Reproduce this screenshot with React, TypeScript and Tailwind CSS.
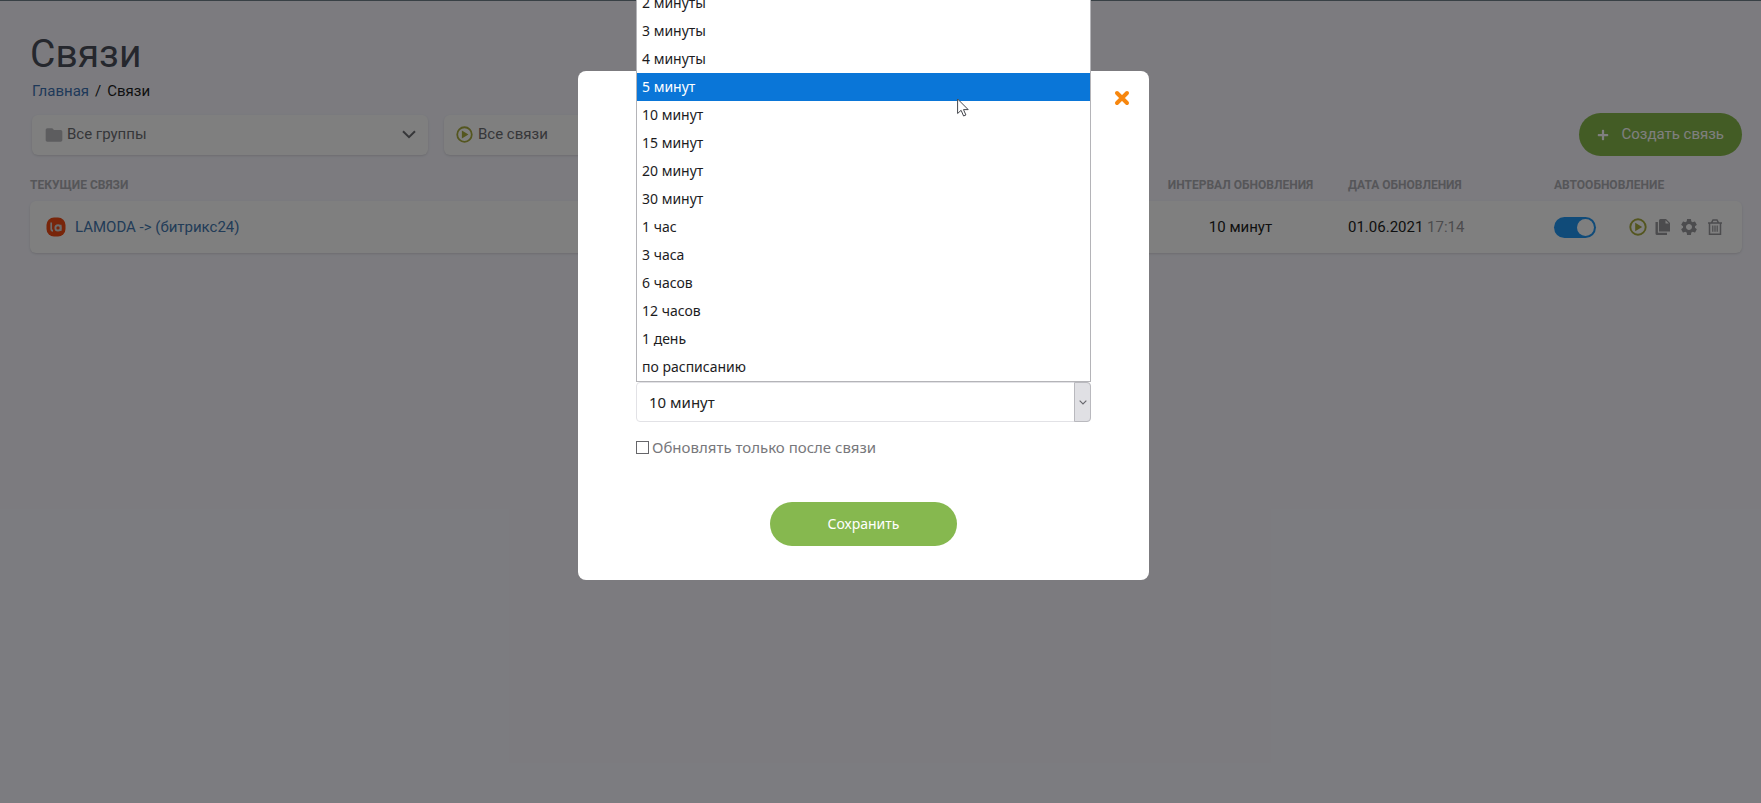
import { FaPlus } from 'react-icons/fa';
import { MdFolder, MdSettings } from 'react-icons/md';

const intervals = [
  '2 минуты',
  '3 минуты',
  '4 минуты',
  '5 минут',
  '10 минут',
  '15 минут',
  '20 минут',
  '30 минут',
  '1 час',
  '3 часа',
  '6 часов',
  '12 часов',
  '1 день',
  'по расписанию',
];

const PlayIcon = ({ className }: { className: string }) => (
  <svg viewBox="0 0 18 18" className={className} fill="none">
    <circle cx="9" cy="9" r="7.700" stroke="currentColor" strokeWidth="1.900" />
    <path d="M6.200 4.800v8.400L13.200 9z" fill="currentColor" />
  </svg>
);

const ChevronIcon = ({ className }: { className: string }) => (
  <svg viewBox="0 0 14 9" className={className} fill="none" stroke="currentColor" strokeWidth="2">
    <path d="M1 1.200l6 6 6-6" />
  </svg>
);

const LamodaLogo = () => (
  <svg viewBox="0 0 20 20" className="size-5 shrink-0">
    <rect x=".5" y=".5" width="19" height="19" rx="7.500" fill="#f04a14" />
    <path d="M5.200 5.600v6.200c0 1.400.6 2 1.800 2" fill="none" stroke="#d8d8d8" strokeWidth="1.700" />
    <circle cx="12" cy="10.900" r="2.600" fill="none" stroke="#d8d8d8" strokeWidth="1.900" />
    <path d="M14.800 7.700v6.200" stroke="#d8d8d8" strokeWidth="1.500" />
  </svg>
);

const CopyIcon = () => (
  <svg viewBox="0 0 18 18" className="size-[18px]" fill="currentColor">
    <path d="M6.500 1H12l4 4v8.500H5V2.500A1.500 1.500 0 0 1 6.500 1zm5 1.200v3.300h3.400z" fillRule="evenodd" />
    <path d="M1.500 4h2.400v10.800H13V17H3a1.500 1.500 0 0 1-1.500-1.500z" />
  </svg>
);

const TrashIcon = () => (
  <svg viewBox="0 0 18 18" className="size-[18px]" fill="none" stroke="currentColor" strokeWidth="1.500">
    <path d="M2 5h14M5.500 4.800L7 2h4l1.500 2.800M3.500 5v11.200h11V5" />
    <path d="M6.800 7.500v6.300M9 7.500v6.300M11.200 7.500v6.300" strokeWidth="1.200" />
  </svg>
);

const Filters = () => (
  <div className="flex items-center gap-4 pl-0.5">
    <div className="relative flex h-10 w-[396px] items-center rounded-md bg-white text-[#6d6e73] shadow-sm">
      <MdFolder className="absolute left-3 size-5 text-[#bbbbbe]" />
      <select aria-label="Группа" className="h-full w-full appearance-none pl-[35px] outline-none">
        <option>Все группы</option>
      </select>
      <ChevronIcon className="pointer-events-none absolute right-3 h-[9px] w-3.5" />
    </div>
    <div className="relative flex h-10 w-[396px] items-center rounded-md bg-white text-[#6d6e73] shadow-sm">
      <PlayIcon className="absolute left-3 size-[17px] text-[#a9ac3f]" />
      <select aria-label="Связь" className="h-full w-full appearance-none pl-[34px] outline-none">
        <option>Все связи</option>
      </select>
      <ChevronIcon className="pointer-events-none absolute right-3 h-[9px] w-3.5" />
    </div>
    <button className="ml-auto flex h-[43px] items-center gap-3 rounded-full bg-[#86b84a] px-[18px] text-white">
      <FaPlus className="size-3" />
      Создать связь
    </button>
  </div>
);

const LinksTable = () => (
  <table className="mt-4 w-full table-fixed border-separate border-spacing-0 text-left">
    <colgroup>
      <col />
      <col className="w-[215px]" />
      <col className="w-[206px]" />
      <col className="w-[75px]" />
      <col className="w-[113px]" />
    </colgroup>
    <thead className="text-xs text-[#acacb2] uppercase">
      <tr className="h-[29px]">
        <th className="pb-1">Текущие связи</th>
        <th className="pb-1 text-center">Интервал обновления</th>
        <th className="pb-1">Дата обновления</th>
        <th className="pb-1" colSpan={2}>Автообновление</th>
      </tr>
    </thead>
    <tbody>
      <tr className="h-[52px] rounded-md bg-white shadow">
        <td className="rounded-l-md pl-4">
          <a href="#" className="flex items-center gap-[9px] text-[#4478b0]">
            <LamodaLogo />
            LAMODA -&gt; (битрикс24)
          </a>
        </td>
        <td className="text-center">10 минут</td>
        <td>
          01.06.2021 <span className="text-[#98989c]">17:14</span>
        </td>
        <td>
          <label className="relative flex h-[21px] w-[42px]">
            <input
              type="checkbox"
              defaultChecked
              aria-label="Автообновление"
              className="h-full w-full appearance-none rounded-full bg-[#ccc] checked:bg-[#2196f3]"
            />
            <span className="pointer-events-none absolute top-0.5 right-0.5 size-[17px] rounded-full bg-white" />
          </label>
        </td>
        <td className="rounded-r-md">
          <div className="flex items-center gap-[7px] text-[#98989c]">
            <button aria-label="Запустить"><PlayIcon className="size-[18px] text-[#a9ac3f]" /></button>
            <button aria-label="Копировать"><CopyIcon /></button>
            <button aria-label="Настройки"><MdSettings className="size-5" /></button>
            <button aria-label="Удалить"><TrashIcon /></button>
          </div>
        </td>
      </tr>
    </tbody>
  </table>
);

const IntervalList = () => (
  <div className="absolute bottom-full left-0 w-full border border-[#b4b4b8] bg-white">
    <ul role="listbox" aria-label="Интервал">
      {intervals.map((item) => (
        <li
          key={item}
          role="option"
          aria-selected={item === '5 минут'}
          className="h-7 px-[5px] text-sm leading-7 text-[#1c1c1e] aria-selected:bg-[#0a76d8] aria-selected:text-white"
        >
          {item}
        </li>
      ))}
    </ul>
    <svg viewBox="0 0 12 19" className="absolute right-[121px] bottom-[264px] h-[19px] w-3">
      <path d="M.6 1v14.500l3.500-3.200 2.500 5.700 2.300-1-2.400-5.400h4.700z" fill="#fff" stroke="#44464c" />
    </svg>
  </div>
);

const IntervalDialog = () => (
  <div className="absolute inset-0 flex items-start justify-center bg-black/50 pt-[71px] pr-[34px]">
    <div
      role="dialog"
      aria-modal="true"
      className="relative w-[571px] rounded-lg bg-white px-[58px] pt-[311px] pb-[34px] font-['Noto_Sans',sans-serif] text-[#222]"
    >
      <button aria-label="Закрыть" className="absolute top-[19px] right-[19px] text-[#f7870f]">
        <svg viewBox="0 0 16 16" className="size-4" stroke="currentColor" strokeWidth="4" strokeLinecap="round">
          <path d="M3 3l10 10M13 3L3 13" />
        </svg>
      </button>

      <div className="relative">
        <select
          aria-label="Интервал обновления"
          className="block h-10 w-full appearance-none rounded-sm border border-[#e2e2e6] px-3 text-[15px] outline-none"
        >
          <option>10 минут</option>
        </select>
        <span className="pointer-events-none absolute inset-y-0 right-0 flex w-[17px] items-center justify-center rounded-r-sm border border-[#b9b9be] bg-[#e0e0e4] text-[#66666c]">
          <ChevronIcon className="h-[5px] w-2" />
        </span>
        <IntervalList />
      </div>

      <label className="mt-3.5 flex items-center gap-[3px] text-[15px] text-[#77777b]">
        <input type="checkbox" className="size-[13px] appearance-none border border-[#66666a] bg-white" />
        Обновлять только после связи
      </label>

      <button className="mx-auto mt-[43px] block h-11 w-[187px] rounded-full bg-[#86b84f] text-sm text-white">
        Сохранить
      </button>
    </div>
  </div>
);

export default function App() {
  return (
    <div className="relative min-h-screen overflow-hidden bg-[#f8f7ff] font-[Roboto,sans-serif] text-[15px] text-[#1d1e22]">
      <header className="h-px bg-[#71808a]" />
      <main className="pt-7 pr-[19px] pl-[30px]">
        <h1 className="text-[39px] leading-[50px] text-[#4a4e5a]">Связи</h1>
        <nav className="flex gap-1.5 pb-[10px] pl-0.5 leading-6">
          <a href="#" className="text-[#3f73b3]">Главная</a>
          <span>/</span>
          <span>Связи</span>
        </nav>
        <Filters />
        <LinksTable />
      </main>
      <IntervalDialog />
    </div>
  );
}
